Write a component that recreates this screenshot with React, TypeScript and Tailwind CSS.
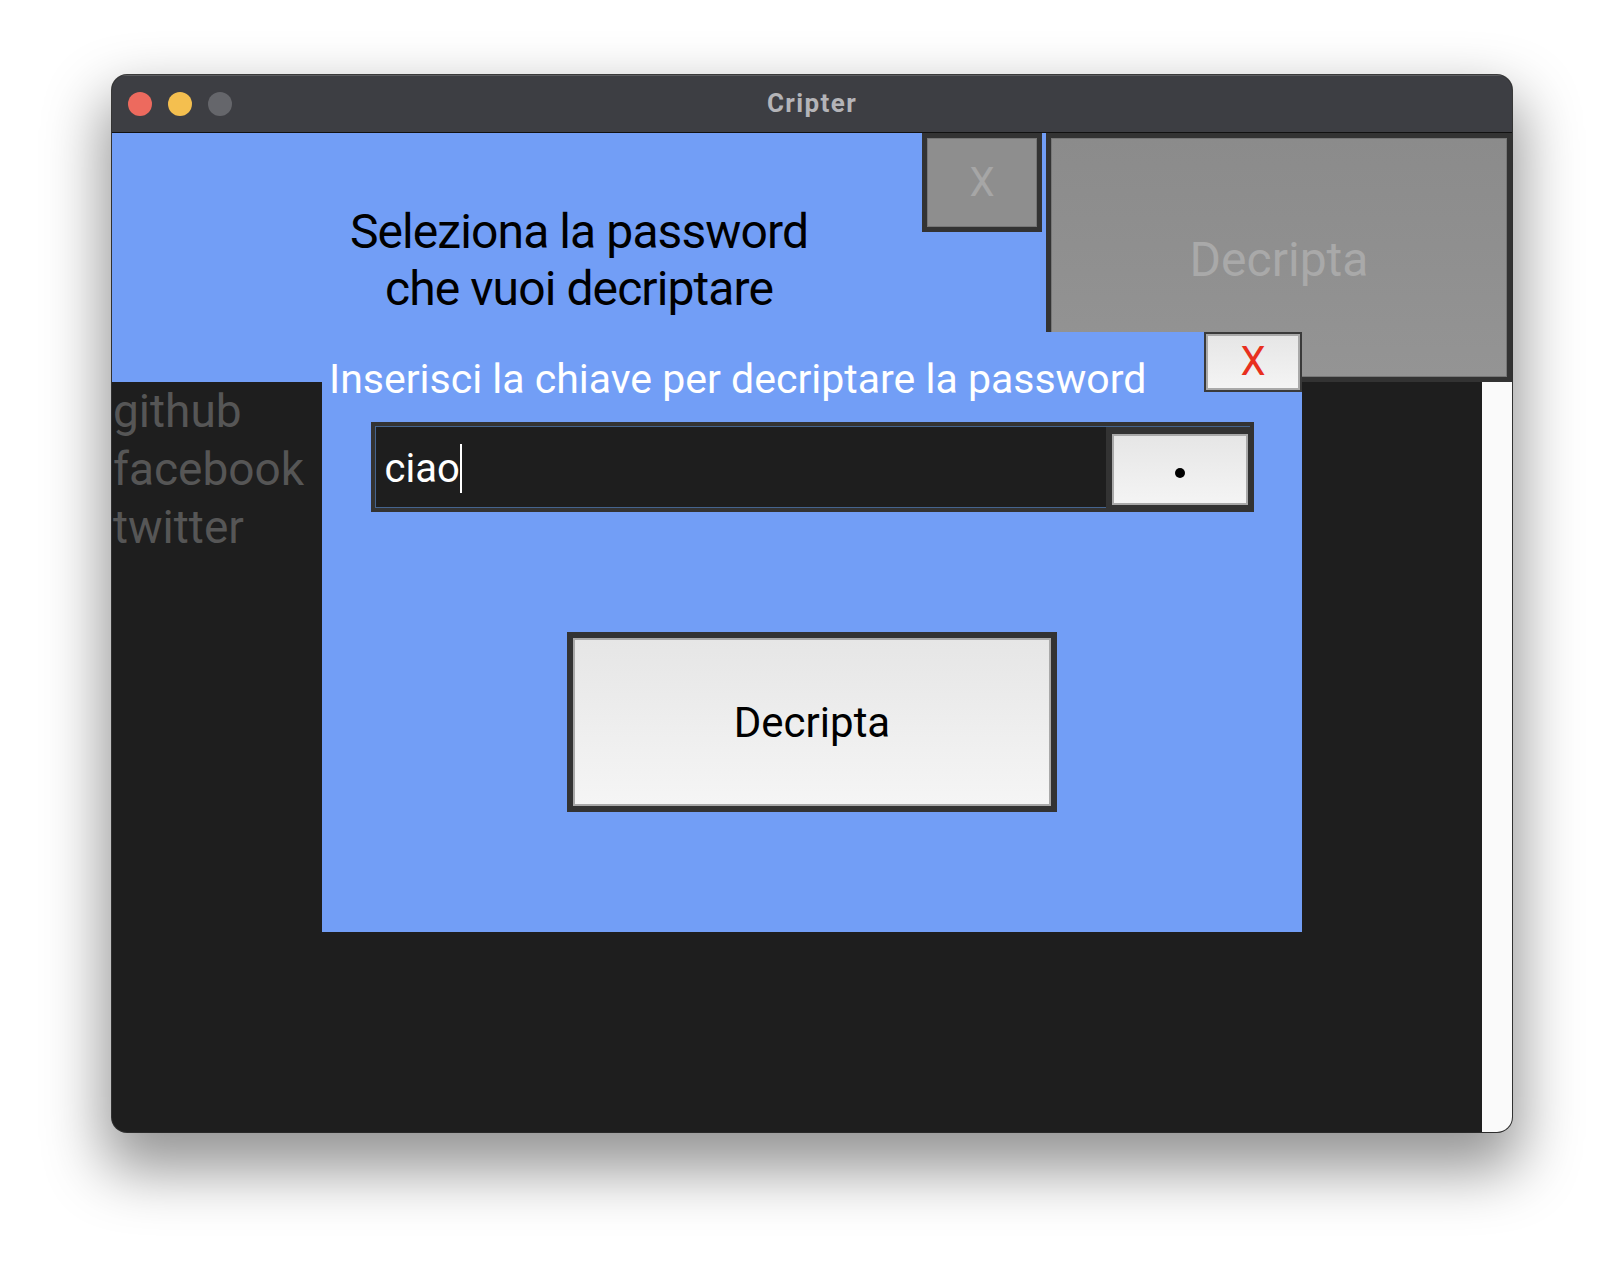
import React from "react";

const sites = ["github", "facebook", "twitter"];

function TrafficLights() {
    return (
        <div className="flex gap-[16px] pl-[16px]">
            <span className="w-[24px] h-[24px] rounded-full bg-[#ed6a5e]" />
            <span className="w-[24px] h-[24px] rounded-full bg-[#f4bf4f]" />
            <span className="w-[24px] h-[24px] rounded-full bg-[#65666b]" />
        </div>
    );
}

function DecryptDialog() {
    return (
        <div className="absolute left-[210px] top-[199px] w-[980px] h-[600px] bg-[#729ef6] flex flex-col">
            {/* close */}
            <button className="absolute right-0 top-0 w-[98px] h-[60px] border-2 border-[#3a3a3a]">
                <span className="flex h-full w-full items-center justify-center border-2 border-[#a9a9a9] bg-gradient-to-b from-[#e6e6e6] to-[#f4f4f4] text-[40px] leading-none text-[#e8301e]">
                    X
                </span>
            </button>

            <p className="pt-[23px] pl-[7px] text-[41px] leading-[48px] text-white">
                Inserisci la chiave per decriptare la password
            </p>

            {/* key input */}
            <div className="mt-[19px] mx-auto w-[883px] h-[90px] bg-[#333] p-[4px] flex flex-col">
                <div className="flex-1 flex border-t border-[#45648e]">
                    <div className="flex-1 flex items-center pt-[3px] pl-[9px] bg-[#1e1e1e] border-l border-b border-[#45648e] text-[40px] leading-[49px] text-white">
                        <span>ciao</span>
                        <span className="w-[2px] h-[49px] bg-white" />
                    </div>
                    <button className="ml-[6px] mr-[2px] mt-[7px] mb-[3px] w-[136px] border-2 border-[#a9a9a9] bg-gradient-to-b from-[#e6e6e6] to-[#f4f4f4] flex items-center justify-center">
                        <span className="mt-[7px] w-[10px] h-[10px] rounded-full bg-black" />
                    </button>
                </div>
            </div>

            <button className="mt-[120px] mx-auto w-[490px] h-[180px] border-[6px] border-[#333]">
                <span className="flex h-full w-full items-center justify-center border-2 border-[#a9a9a9] bg-gradient-to-b from-[#e6e6e6] to-[#f5f5f5] text-[42px] text-black">
                    Decripta
                </span>
            </button>
        </div>
    );
}

export default function App() {
    return (
        <div className="w-[1624px] h-[1280px] bg-white pl-[112px] pt-[75px] font-['Roboto',sans-serif]">
            <div className="w-[1400px] h-[1057px] rounded-[15px] overflow-hidden bg-[#1e1e1e] flex flex-col shadow-[0_0_0_1px_rgba(0,0,0,0.75),0_30px_60px_8px_rgba(0,0,0,0.42)]">

                {/* Title bar */}
                <div className="h-[58px] shrink-0 grid grid-cols-[1fr_auto_1fr] items-center bg-[#3d3e43] border-b border-[#111] shadow-[inset_0_1px_0_rgba(255,255,255,0.16)]">
                    <TrafficLights />
                    <div className="text-[26px] font-bold tracking-[1.4px] text-[#b4b4b8]">Cripter</div>
                    <div />
                </div>

                {/* Content */}
                <div className="relative flex-1 flex flex-col">
                    <div className="h-[249px] shrink-0 flex">
                        <div className="w-[934px] grid bg-[#729ef6]">
                            <h1 className="[grid-area:1/1] self-center justify-self-center pt-[5px] text-center text-[48px] leading-[57px] tracking-[-0.9px] text-black">
                                Seleziona la password
                                <br />
                                che vuoi decriptare
                            </h1>
                            <button className="[grid-area:1/1] self-start justify-self-end mr-[4px] w-[120px] h-[99px] border-[5px] border-[#333] bg-[#8e8e8e] shadow-[inset_0_0_0_1px_#777] flex items-center justify-center text-[40px] text-[#a6a6a6]">
                                X
                            </button>
                        </div>
                        <button className="flex-1 border-[5px] border-[#333] bg-gradient-to-b from-[#8b8b8b] to-[#949494] shadow-[inset_0_0_0_1px_#777] flex items-center justify-center pt-[4px] text-[48px] text-[#a9a9a9]">
                            Decripta
                        </button>
                    </div>

                    <div className="flex-1 flex">
                        <ul className="w-[210px] pl-[1px] text-[46px] leading-[58px] text-[#565656]">
                            {sites.map((site) => (
                                <li key={site}>{site}</li>
                            ))}
                        </ul>
                        <div className="flex-1" />
                        <div className="w-[30px] bg-[#fafafa]" />
                    </div>

                    <DecryptDialog />
                </div>
            </div>
        </div>
    );
}
